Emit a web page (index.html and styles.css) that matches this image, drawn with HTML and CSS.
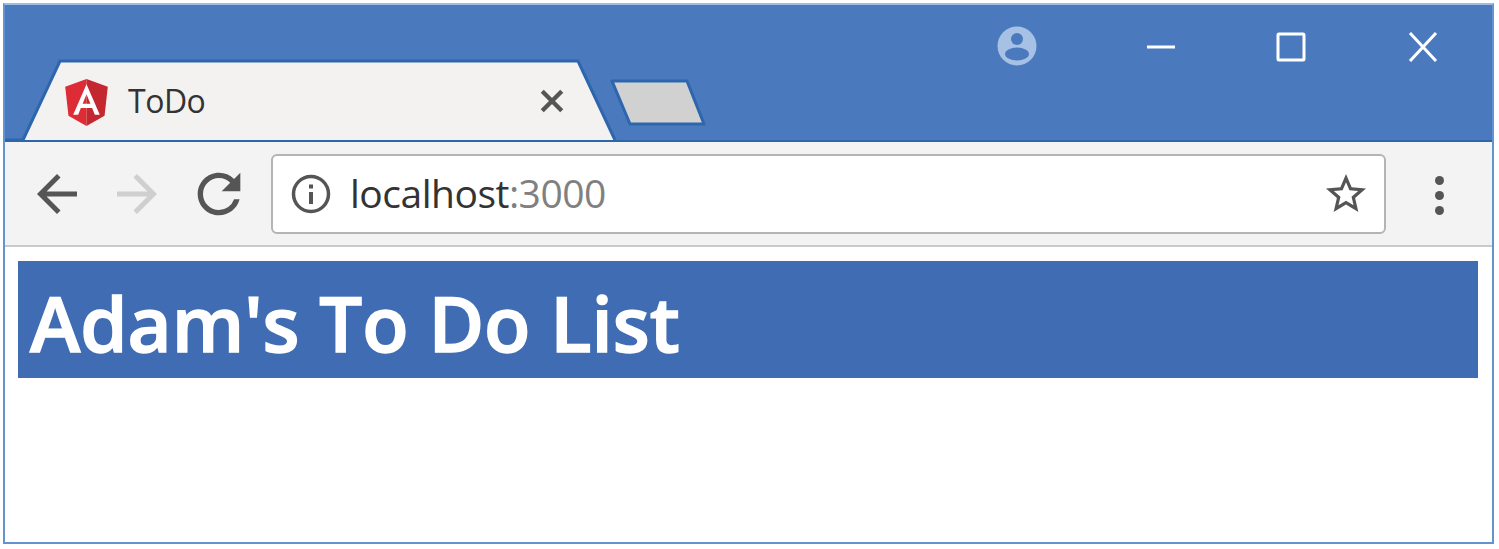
FILE: index.html
```html
<!DOCTYPE html>
<html lang="en">
<head>
  <meta charset="UTF-8" />
  <title>ToDo</title>
  <link rel="stylesheet" href="styles.css">
</head>
<body>
  <div class="window">

    <!-- TITLE BAR -->
    <header class="titlebar">
      <div class="tabs">
        <div class="tab">
          <svg class="tab-shape" viewBox="0 0 612 83" width="612" height="83">
            <path d="M0 81H18L55 2H573L610 81" fill="#f3f2f1" stroke="#2e66ae" stroke-width="3"/>
          </svg>
          <svg class="tab-icon" viewBox="31 30 188 200" width="43" height="47" preserveAspectRatio="none">
            <polygon points="125,30 31.9,63.2 46.1,186.3 125,230" fill="#dd2c36"/>
            <polygon points="125,30 125,230 203.9,186.3 218.1,63.2" fill="#c3272f"/>
            <path d="M125 52.1L66.8 182.6h21.7l11.7-29.2h49.4l11.7 29.2h21.7L125 52.1zM142 135.4H108l17-40.9 17 40.9z" fill="#fff"/>
          </svg>
          <span class="tab-title">ToDo</span>
          <svg class="tab-close" viewBox="0 0 24 24" width="26" height="26">
            <path d="M3 3L21 21M21 3L3 21" stroke="#555" stroke-width="4" fill="none"/>
          </svg>
        </div>
        <svg class="new-tab" viewBox="0 0 100 50" width="100" height="50">
          <path d="M4 3H79L96 46H22Z" fill="#d1d1d1" stroke="#2e66ae" stroke-width="3" stroke-linejoin="round"/>
        </svg>
      </div>
      <div class="controls">
        <svg class="avatar" viewBox="0 0 40 40" width="40" height="40">
          <circle cx="20" cy="20" r="19.5" fill="#a6c1e4"/>
          <circle cx="20" cy="13" r="6" fill="#4a7abd"/>
          <ellipse cx="20" cy="28" rx="12" ry="6.5" fill="#4a7abd"/>
        </svg>
        <svg class="ctrl ctrl-min" viewBox="0 0 30 30" width="30" height="30">
          <path d="M1 15H29" stroke="#fff" stroke-width="3"/>
        </svg>
        <svg class="ctrl ctrl-max" viewBox="0 0 30 30" width="30" height="30">
          <rect x="2" y="2" width="26" height="26" rx="1" fill="none" stroke="#fff" stroke-width="3"/>
        </svg>
        <svg class="ctrl ctrl-close" viewBox="0 0 30 30" width="30" height="30">
          <path d="M2 1L28 29M28 1L2 29" stroke="#fff" stroke-width="3"/>
        </svg>
      </div>
    </header>

    <!-- TOOLBAR -->
    <nav class="toolbar">
      <svg class="nav-icon" viewBox="0 0 24 24" width="60" height="60">
        <path d="M20 11H7.83l5.59-5.59L12 4l-8 8 8 8 1.41-1.41L7.83 13H20v-2z" fill="#555"/>
      </svg>
      <svg class="nav-icon" viewBox="0 0 24 24" width="60" height="60">
        <path d="M4 11h12.17l-5.59-5.59L12 4l8 8-8 8-1.41-1.41L16.17 13H4v-2z" fill="#cfcfcf"/>
      </svg>
      <svg class="nav-icon" viewBox="0 0 24 24" width="64" height="64">
        <path d="M17.65 6.35A7.958 7.958 0 0 0 12 4c-4.42 0-7.99 3.58-7.99 8s3.57 8 7.99 8c3.73 0 6.84-2.55 7.73-6h-2.08A5.99 5.99 0 0 1 12 18c-3.31 0-6-2.69-6-6s2.69-6 6-6c1.66 0 3.14.69 4.22 1.78L13 11h7V4l-2.35 2.35z" fill="#555"/>
      </svg>
      <div class="omnibox">
        <svg class="info" viewBox="0 0 40 40" width="40" height="40">
          <circle cx="20" cy="20" r="17.5" fill="none" stroke="#555" stroke-width="3.5"/>
          <rect x="18" y="18" width="4" height="12" fill="#555"/>
          <rect x="18" y="10.5" width="4" height="4" fill="#555"/>
        </svg>
        <span class="url">localhost<span class="url-port">:3000</span></span>
        <svg class="star" viewBox="0 0 24 24" width="48" height="48">
          <path d="M22 9.24l-7.19-.62L12 2 9.19 8.63 2 9.24l5.46 4.73L5.82 21 12 17.27 18.18 21l-1.63-7.03L22 9.24zM12 15.4l-3.76 2.27 1-4.28-3.32-2.88 4.38-.38L12 6.1l1.71 4.04 4.38.38-3.32 2.88 1 4.28L12 15.4z" fill="#555"/>
        </svg>
      </div>
      <div class="menu">
        <span class="dot"></span>
        <span class="dot"></span>
        <span class="dot"></span>
      </div>
    </nav>

    <!-- PAGE -->
    <main class="page">
      <h1>Adam's To Do List</h1>
    </main>
  </div>
</body>
</html>
```

FILE: styles.css
```css
/* GLOBAL RESET */
*, *::before, *::after { box-sizing: border-box; margin: 0; padding: 0; }
html, body { height: 549px; overflow: hidden; background: #fff; }
body { padding: 3px 5px 5px 3px; font-family: "Open Sans", sans-serif; }

/* WINDOW */
.window {
  display: flex;
  flex-direction: column;
  height: 100%;
  border: 2px solid #6592d0;
  border-top-color: #9dbde6;
  background: #fff;
}

/* TITLE BAR */
.titlebar {
  display: flex;
  justify-content: space-between;
  align-items: flex-start;
  height: 137px;
  background: #4a7abd;
  border-bottom: 2px solid #2e66ae;
}
.tabs {
  display: flex;
  align-items: flex-end;
  align-self: flex-end;
  margin-bottom: -2px;
}
.tab {
  position: relative;
  display: flex;
  align-items: center;
  width: 610px;
  height: 83px;
  padding: 0 0 0 60px;
}
.tab-shape { position: absolute; top: 0; left: 0; }
.tab-icon { position: relative; margin-right: 20px; margin-top: 3px; }
.tab-title { position: relative; width: 411px; font-size: 32px; color: #333; letter-spacing: -0.5px; }
.tab-close { position: relative; }
.new-tab { margin: 0 0 14px -7px; }

.controls {
  display: flex;
  align-items: center;
  margin-top: 23px;
  padding-right: 54px;
}
.avatar { margin-right: 109px; margin-top: -2px; }
.ctrl-min { margin-right: 100px; }
.ctrl-max { margin-right: 102px; }

/* TOOLBAR */
.toolbar {
  display: flex;
  align-items: center;
  height: 105px;
  padding-left: 22px;
  gap: 20px;
  background: #f3f3f3;
  border-bottom: 2px solid #c9c9c9;
}
.nav-icon { flex: none; }
.omnibox {
  display: flex;
  align-items: center;
  flex: 1;
  height: 80px;
  padding: 0 14px 0 18px;
  background: #fff;
  border: 2px solid #b4b4b4;
  border-radius: 6px;
}
.url { flex: 1; margin: -3px 0 0 19px; font-size: 39px; color: #333; letter-spacing: -0.5px; }
.url-port { color: #808080; }
.menu {
  display: flex;
  flex-direction: column;
  align-items: center;
  gap: 6px;
  width: 86px;
  margin: 3px 20px 0 -20px;
  padding-left: 20px;
}
.dot { width: 9px; height: 9px; border-radius: 50%; background: #555; }

/* PAGE */
.page { flex: 1; padding: 14px 14px 0 13px; }
h1 {
  height: 117px;
  padding-left: 12px;
  background: #3f6cb3;
  color: #fff;
  font-size: 76px;
  font-weight: 600;
  line-height: 124px;
  -webkit-text-stroke: 1.5px #fff;
}
```
